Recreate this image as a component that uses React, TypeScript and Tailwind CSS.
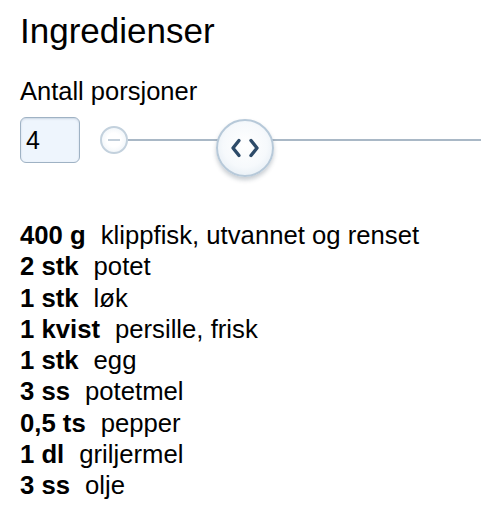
const ingredients = [
  { amount: "400 g", name: "klippfisk, utvannet og renset" },
  { amount: "2 stk", name: "potet" },
  { amount: "1 stk", name: "løk" },
  { amount: "1 kvist", name: "persille, frisk" },
  { amount: "1 stk", name: "egg" },
  { amount: "3 ss", name: "potetmel" },
  { amount: "0,5 ts", name: "pepper" },
  { amount: "1 dl", name: "griljermel" },
  { amount: "3 ss", name: "olje" },
];

function Thumb() {
  return (
    <div className="absolute left-[116px] top-[2px] w-[58px] h-[58px] rounded-full border-2 border-[#b7c9d9] bg-[radial-gradient(circle_at_50%_45%,#ffffff_0%,#f6f9fc_55%,#dbe6ef_100%)] shadow-[0_3px_4px_rgba(40,60,80,0.25)]">
      <svg width="54" height="54" viewBox="0 0 54 54" className="block">
        <path d="M21 19.5 L15 27 L21 34.5" fill="none" stroke="#2d4b69" strokeWidth="3.4" strokeLinecap="round" strokeLinejoin="round" />
        <path d="M33 19.5 L39 27 L33 34.5" fill="none" stroke="#2d4b69" strokeWidth="3.4" strokeLinecap="round" strokeLinejoin="round" />
      </svg>
    </div>
  );
}

function PortionSlider() {
  return (
    <div className="relative flex-1 h-[60px] ml-[20px]">
      <div className="flex items-center h-[46px]">
        <div className="w-[28px] h-[28px] rounded-full border-2 border-[#c3d1dd] bg-[radial-gradient(circle,#ffffff_40%,#e8eff5_100%)] flex items-center justify-center shrink-0">
          <div className="w-[12px] h-[2px] bg-[#c2ced9]" />
        </div>
        <div className="flex-1 h-[2px] bg-[#a9b8c6]" />
      </div>
      <Thumb />
    </div>
  );
}

export default function App() {
  return (
    <div className="min-h-[518px] bg-white text-black pl-[20px] font-['Liberation_Sans',Arial,sans-serif]">
      <h1 className="pt-[11px] text-[35px] leading-[39px] font-normal">Ingredienser</h1>

      <div className="mt-[27px] text-[25.5px] leading-[28px]">Antall porsjoner</div>

      <div className="mt-[12px] flex items-start">
        <div className="w-[60px] h-[46px] rounded-[6px] border border-[#9fb2c4] bg-[#eef5fd] shadow-[inset_0_1px_2px_rgba(0,40,80,0.15)] pl-[5px] text-[25px] leading-[44px]">
          4
        </div>
        <PortionSlider />
      </div>

      <ul className="mt-[43px] text-[25.7px] leading-[31.25px]">
        {ingredients.map((i) => (
          <li key={i.amount + i.name} className="whitespace-nowrap">
            <span className="font-bold mr-[15px]">{i.amount}</span>
            {i.name}
          </li>
        ))}
      </ul>
    </div>
  );
}
